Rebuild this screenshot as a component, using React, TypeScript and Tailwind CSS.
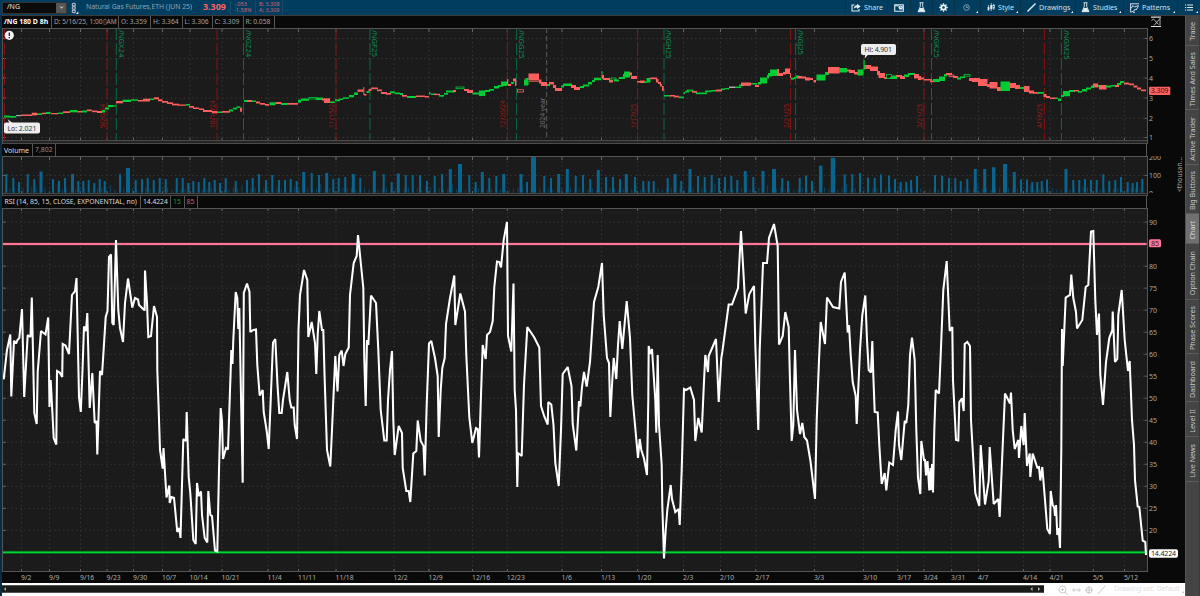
import type { ReactNode } from 'react';
import { ChevronDown } from 'lucide-react';

const RED = '#ff5f5f';
const GREEN = '#00cc33';

const WEEKS: [number, string][] = [
  [21.5, '9/2'], [49.5, '9/9'], [80.5, '9/16'], [107, '9/23'], [133.5, '9/30'], [162.5, '10/7'], [190, '10/14'],
  [222, '10/21'], [268, '11/4'], [298.5, '11/11'], [336, '11/18'], [394, '12/2'], [429, '12/9'], [472.5, '12/16'],
  [507.3, '12/23'], [562, '1/6'], [601.5, '1/13'], [637.6, '1/20'], [683.5, '2/3'], [720.5, '2/10'], [755.8, '2/17'],
  [814.4, '3/3'], [863.5, '3/10'], [897.5, '3/17'], [924, '3/24'], [951.6, '3/31'], [978.5, '4/7'], [1023.5, '4/14'],
  [1050, '4/21'], [1093.4, '5/5'], [1124.4, '5/12'],
];

const EXPIRATIONS: [number, string][] = [
  [4.5, ''], [107, '9/20/24'], [217, '10/18/24'], [336, '11/15/24'], [507.3, '12/20/24'], [637.6, '1/17/25'],
  [790.6, '2/21/25'], [924, '3/21/25'], [1044.4, '4/18/25'],
];

const CONTRACTS: [number, string][] = [
  [116.3, '/NGX24'], [243.5, '/NGZ24'], [370, '/NGF25'], [516.6, '/NGG25'], [664, '/NGH25'], [795.6, '/NGJ25'],
  [931.5, '/NGK25'], [1061.4, '/NGM25'],
];

// x y width height kind: g/r filled, o/p hollow green/red, w neutral
const CANDLES = `4 115.5 6 2 g;10 116 6 1.7 g;16 115 5 1.2 w;21 114.5 11 1.5 r;31.7 112.7 5.3 2.7 r;37 113.3 5 1.7 g;42 112.7 4 1.5 r;46 112 4.5 2 g;51 113 7 1.3 r;58 112.5 5 1.5 g;63 111.3 7 1.7 r;70 110 7 2.3 g;77 111 5 1.5 r;82 110.5 5 2 g;86.7 109.5 5 1.7 r;92 110.5 5.5 1.7 r;97 111 5 2 r;102 110 3 2.5 g;105 107.5 4 2 g;108 105 5 2 g;113 105.3 3 1.3 g;116 101 7 2.3 r;122.5 99.7 8.5 2.3 g;131 99.3 7 1.5 g;138 100 12 1.5 r;143 98.7 7 1.7 r;150 98.5 4 1.5 g;154 97.3 5 2 r;158 99.3 4.5 2 r;162 101 6 1.7 r;167 102.3 6 1.7 r;172 103.7 7 1.7 r;178 104.5 8 1.3 r;186 104 4 1.5 g;189 106 5 1.7 r;193 107.5 6 1.5 r;199 108.5 5 1.5 r;203 110 9 2 r;212 111 5 2.3 r;217 111.5 6 1.5 g;222 111 8 1.7 r;229 109.5 4 2 g;233 107.7 4 1.7 g;236.5 106.3 4 1.5 g;240 107.7 2 4 r;244 100 3 2 g;247 100 5 2 r;252 100.5 4 1.5 g;256 101.5 4 2 r;260 103 5 1.7 r;265 104 4 1.7 r;269.5 102.3 6 3 g;275.5 102 6 2 r;281 103 6 2 g;287 103 11 1.7 r;298 99.7 3 3 g;301 98.5 8 2.3 g;309 97.5 7 1.5 o;316 97.5 7 2.5 g;322 98.5 3 2 r;324 98.3 6 4.7 r;330 101.5 5 1.5 g;335 99.3 5 2 g;339 98.5 4 1.5 g;343 97.3 6 1.5 g;349 95 5 2.3 g;354 92.5 4 2.5 g;357.5 89.5 6 2.3 r;363.3 87 1 8 r;364 94 2.5 1.5 r;366.5 91 3 2 g;368.5 89 3 2 r;371 87.5 7 1.7 r;377 89.5 5 1.7 r;381 92 6 2 r;386 93 5 1.7 r;390 91.3 5 2 g;395 92.5 5 1.7 g;400 93 3 2 g;402 95 5 1.7 r;407 96 9 2 g;416 95.5 9 1.5 r;425 96 4 1.5 r;429 92 1.5 2.5 g;431 93.5 5 1.5 g;434 93.8 6 1.3 r;439 95 5 1.7 g;444 93 4 1.7 g;446 90.5 9 2 g;453 90 3 2 r;456 87 8 1.7 o;464 89 5 2 r;467 90 6 3 r;472.5 92.5 6.5 2 g;479 90.5 6 5.5 g;485 90 5 2 g;489 89 5 1.7 g;494 86 5 2.5 g;498 85 5 1.7 g;501 81.5 6 4.5 g;507 79 1.3 6 r;508 84 3 2 r;511 82 3 2 g;513 78.5 3 3 r;515 80 1.3 6 r;517.5 89.7 6 2.3 p;524 79.5 4 6 g;525.5 78 3 7 g;528.5 73.5 10.5 6.5 r;529 80.5 10 1.2 r;539 79.5 2.5 4 r;541 82 6 4 r;547 84 3 2 g;549 82 5 2.5 r;553 85 3 3 r;555 88 7 3 r;561 85.5 3 2 g;563 83.5 9 2.5 g;571 85 5 3 r;574 87 6 3 r;580 86 4 2 g;583 84.5 6 2 g;588 82 4 2.5 g;592 80 3 2 g;594 77.7 7 2.5 g;601.5 71 1 7 g;602 75 2 4 r;603 78 7 2 r;609 80 4 2.5 r;611 78 5 2 o;614 79.5 5 2 g;619 77 6 2 g;623 74 5 3 g;624 71.5 6 6 g;629 72.5 3 3 r;631 76 6 3 r;637 81 4 1.5 r;640 80.5 5 2.5 r;644 81.5 3 1.5 g;646.5 78 4 4.5 g;650 77.5 7 1.7 r;656 79 2.5 3.5 r;658 82 3 2 r;660 84 2 2.5 r;662 86 1.7 5 r;664 95 7 1.5 g;670 95 5 1.5 r;674 95.7 5 1.7 r;679 96.5 5 1.7 g;683.5 92 1.5 2 g;685 91 4 1.5 g;687 90 6 1 o;692 91 5 1.7 r;696 92.5 11 1.7 g;705 90.5 6 1.7 g;711 90 5 1.5 g;716 89.5 6 2 r;721 88.5 4 1.5 g;725 88 4 1.3 g;729 86.5 6 1.5 w;735 86.5 6 1.5 g;739 84.5 5 1.7 g;741 82.5 10 3.3 r;751 83 6 1.5 g;755 85 4 2 r;758 82 3 2.5 g;760 77.5 7 6 g;767 75 2 3.5 g;768 73 4 3.5 g;770 69.5 8 6.5 g;777 69 2 6 r;778 73 5 3 r;783 72 3 2.5 r;785 68.5 5 5.5 r;790 73 1 5 r;791 77.7 3 2 g;794 77 2 2 g;796 75.5 3 2.5 g;797 76 5 2.5 r;802 76.5 4 2 r;805 77.5 5 3 r;809 78 4 2 r;813.5 80 2.5 2.5 r;816.5 74.5 9 6 g;825 72 4 3 g;828 67 11.5 6.5 r;839 68 8 4.5 g;847 69.5 4 2 r;849 70 6 3 r;854 72 4 2.5 r;857.5 69.5 6 6 g;863.5 60 1.2 10 g;864 65 2 4 g;866 65 5 4 r;870 66.5 8 4.5 r;877 71 3 4 r;878.5 73 6.5 5 r;884 77 3 2 r;886.5 74.5 5 4 o;890 77 7 2 g;892 75.5 5 2.5 g;896 75 6 2 r;900 76 5 3 r;904 74.5 5 2.5 g;908 73 7 2 g;914 74 5 4.5 r;918 76 3 4 r;921 77.5 3 2 r;924 79 8 1.5 r;930 80.5 5 1.7 r;933 79 7 3 g;939 76.5 6 4.5 g;944 74 3 2.5 g;946 73 6 2 r;949 75 5 1.5 p;953 76 5 2 r;957 77.5 4 2 g;960 76.5 5 1.5 g;964 74.5 6 1.7 o;969 78 5 3 r;972 78 8 4 r;978 79 9.5 7 r;987 84 3 3 r;989.5 82 8 6.5 r;997 87 4 4 r;1000.5 81.5 9.5 9.5 g;1010 83 6 5 r;1015 85 5 4 r;1019 87 6 2 g;1024 86 5.5 6 r;1029 90.5 5 3 r;1033 92 6 1.7 r;1037 92 7 1.7 g;1043.5 94 3 3 r;1046 96 4 2 r;1050 97.5 5 1.5 r;1055 97.5 3 1.5 g;1058 98.5 3 2.5 g;1061 95 3 2 g;1063 91 7 5.3 g;1069 90 6 2 g;1074 90 5 1.5 r;1078 91 4 1.7 g;1082 89 5 2.5 g;1086 87.5 5 2 g;1091 85.5 3 2.5 g;1093 83.5 5 4 r;1098 85 3 2 g;1099 85 7.5 4.5 r;1106 85.5 5 2 g;1111 85 5 1.5 g;1115 85 4 2 r;1117 83 4 2 g;1120 81 4 2 g;1124 82.5 5 2 r;1129 83.5 5 1.7 r;1133.5 85.5 4 2 r;1137 87.5 4 2 r;1141 89.5 5 1.7 r`
  .split(';')
  .map((row) => {
    const [x, y, w, h, kind] = row.split(' ');
    return { x: +x, y: +y, w: +w, h: +h, kind };
  });

// center x, top y, width
const VOLUME: [number, number, number?][] = [
  [6.3, 174], [13.3, 178], [19, 182], [27.7, 174], [34.3, 179], [41, 171.5, 3], [53, 179], [59, 181], [65, 178],
  [72.5, 174, 3], [78.3, 181], [83.3, 181], [88.7, 180], [94.3, 183], [99.7, 179], [104.7, 181], [120, 174],
  [128, 168, 4], [135.7, 180], [142, 179], [147.7, 178], [153.7, 180], [159.7, 178], [165.7, 179], [176.7, 178],
  [182.7, 178], [188.3, 183], [193.3, 181], [198.7, 182], [204.3, 178], [209.3, 182], [214.7, 180], [220, 183],
  [225.7, 178], [235.7, 181], [247, 180], [252.7, 178], [259, 174], [266, 180], [272.3, 175], [279, 180], [285, 180],
  [290.7, 179], [296.7, 181], [303.7, 172, 3], [311.7, 173], [319, 175], [326.7, 173, 3], [333.3, 179], [338.7, 178],
  [345.3, 177], [353.3, 174, 3], [360.3, 178], [374.3, 171, 3], [383.7, 174], [391.7, 182], [398.3, 173.5, 3],
  [405.7, 175], [412.7, 175], [420, 175], [427, 181], [434.7, 176], [442, 174], [450.3, 169, 3], [460, 164, 4],
  [469.3, 175], [475.7, 182], [482.3, 172, 3], [489.3, 178], [496.3, 176], [503.7, 174, 3], [521, 174, 3], [527, 182],
  [533.5, 156.7, 5], [544.3, 176], [551, 178], [558.7, 174, 3], [567.3, 169, 3], [575.7, 176], [583, 175],
  [590.3, 179], [598.3, 170, 3], [606, 177], [613, 177], [620, 179], [626.3, 174, 3], [635, 177], [643.3, 181],
  [648.7, 181], [653.7, 181], [667.7, 178], [675, 174, 3], [681.3, 181], [690, 169, 3], [698, 176], [704.7, 177],
  [711.7, 175], [719, 178], [725, 177], [731.3, 176], [737.3, 180], [745.3, 171, 3], [753.3, 177], [763, 171, 3],
  [774, 169, 4], [782.3, 178], [788, 181], [799.7, 178], [806, 175.5], [812, 181], [820.7, 165.7, 3.5],
  [833, 157.7, 4.5], [844.7, 174.3], [852.3, 174], [860, 173], [868, 177.5], [874.7, 178], [881, 174.3], [889, 175.5],
  [895, 179], [900.7, 182], [906.3, 182], [911, 180], [917, 176], [935, 175], [942, 175.5], [949, 178], [955.3, 178],
  [960.7, 181], [967.3, 179], [975.3, 169, 3], [984.7, 169, 3], [993.7, 167.3, 3.5], [1005, 164, 4], [1014.3, 172, 3],
  [1021, 179.5], [1027, 179.5], [1032.3, 182], [1037.3, 182], [1041.7, 181], [1047, 179.5], [1066, 169, 3],
  [1073.3, 180], [1079.3, 180], [1085, 179], [1091, 180], [1096.7, 180], [1103.3, 174.3], [1109.3, 181], [1115.3, 180],
  [1121, 177], [1127.7, 182], [1132.7, 183], [1137, 182], [1142.3, 179],
];

const RSI_LINE =
  '3.7,379.3 7,350 10.3,334.5 11.3,396.5 14,340.7 16,343.5 17.5,340 19.3,338 22,309 24.2,397 27.7,335 30.5,337 31.8,297.5 34.3,413 36.7,424 37.7,372 41,331 45.5,334.5 48.2,317.5 49.5,407 50.7,380 53.7,438 56.3,444.5 57,371 59.7,372.5 62.2,377 62.7,344 65.5,345.5 69,354 72,295 75,291 76.5,278 79,397 80.8,412 82.5,370 84,326.5 86,331 87.3,313 89.7,408 92.3,373 94.7,423 96.5,421 97.3,454.5 100,371 102,375 103.5,352 105.7,317 107.5,311 109,257 111,254.5 112.3,323 113.7,325 116,240 118.3,310 120,328 123,342 125,303 128,278.5 132.3,307.5 135,298 138,299.5 139,305 144.7,310.5 145,270.5 147,303 148.3,337 151,336 154,306 157,317 157.3,370 158.5,404 160,450 162.7,468.5 163.5,448 166.5,497.5 169.3,485.5 169.7,503 171.3,497 174,497.7 177.3,532 179.3,528 180.5,538 181.7,495 183.3,439 186,441 186.7,412 188.7,477 190.3,493 193.3,540 195.7,544 197,483 198.7,496 201,491.5 202,515 204.7,538 207.3,542.5 208.3,491 210.3,515 212,516 215,550.5 217.3,551.5 219,470 220.7,408 222,421 223,459 226,448 228,449.5 230.7,370 231.3,350 232.5,364 233.3,340 235.7,292 237.3,298 238.3,329 239.3,308 242.7,482.7 243.8,293 247,283.5 249.5,292 250.3,332 253.3,330 256,329.5 257.3,365 259.7,395.5 262.7,390 263.7,412 266.7,431 268.7,449 270.7,400 273,342.5 275.3,339 277.5,385 279.3,413 281.7,413 283,400 287.3,372 289.7,400 291.3,407.5 293.7,407.5 294.7,425 297,439 298.5,330 300,295 304,270 307.3,280 308.3,337 311.7,322 315,343 316.3,374 317.7,335 319.3,311 322,330 323.3,330 324.7,380 327,450 330.3,466.5 332,430 335.3,356 337.5,391.5 339.3,355 341.7,350.5 343.5,366 345.3,354 348.7,347.5 350,295 353.7,263 356.7,256 358,235 361,265 363.3,288 364.3,360 365.7,406 367,340 368.3,345 371,295.5 376,303 378.3,350 380.7,410 384.3,440.5 386.7,440.5 388,400 390,370 392,351 393.3,420 394.7,455 398.7,426 402,433 402.7,468 406.3,491 408.7,491 410.3,502 413.3,453.5 416.3,451 417.7,420.5 420.7,441 423.5,446 424.7,475.5 426.7,405 429,343.5 431.3,341 435,358 437.7,376 438.7,437 440.7,390 442.3,368 444.7,358 446,324 450,298 454.3,275.5 455.3,325 457.7,310 460.3,293.5 465,311.5 466.3,355 469.3,417 472.3,443 476,428 477.7,429 479,457.5 481,395 482.7,345 485.7,359 487,335 490,332 492.7,321 494.3,287 497,261.5 499.3,262 501,267.5 503.7,240 507,222 508,336 511.3,351.5 513.5,283.5 514.7,390 516,410 517.3,487 518,453 521.7,456 524,385 527.3,327 534.3,337.5 539.3,347.5 541,406 544.3,416.5 547.7,424.5 548.3,402 551.3,404.5 553.5,425 555.3,463 558.7,486 561,430 562.7,374 567.7,367 571.5,386 572.7,424 576.3,450.5 579,401 580.3,406.5 582,387 584,372 586.7,386.5 590,362 594,302 598.3,287 602,263 603.7,315 607,358 609,363 610.3,417 612,385 613.7,358 616.3,379 618,345 619.7,321 622.3,349 626.7,301 630,338 632.3,395 635,425 638,458 639.7,439 641.3,450 644,458.5 647,475 648.3,400 648.7,346 650.3,354 652,349 655.3,400 656.3,432.7 657.7,355 659,425 661.7,465 662.3,505 664,558.5 665.7,530 667.3,510 670.7,485 672,499 675.3,512 678.7,509 679.7,525 681.7,470 684,389 686,390 690.3,387.5 694,400 695.3,441 698.3,418 701.7,432.5 703.7,388 705.3,355 708,372 708.7,356 716,339 718.7,402 721.3,358 722.3,352 728.7,304.5 732,304.5 738,288 741,231 743.3,270 745.7,313.5 749.3,294 754,286 755.3,345 758.3,430 759.7,350 763,263 767,263 769,238 774,224 777.7,246 779,344.5 782.7,336 785.3,312 788.7,327 789.7,370 791.7,441 793.3,425 795,350 797,410 800,434 802.3,423 804.3,437 807,440.5 810.3,460 815,499 816.7,420 819,360 820.7,322 825,344 827,297.5 833,307 839.3,308.5 841,282 844.7,272.5 847.7,332.5 849,325 850.7,355 852.7,382 855.7,396 856.7,424 860,350 862.3,315 865.3,295.5 867,340 868.7,370 871,372.5 872.3,341 873.3,375 874.7,412 877.7,412.5 879.3,445 881.7,484 884.7,473 886.3,490.5 889.3,462.5 893,465 895.7,430 898,411.5 899,445 901.3,460 904.7,421 906.3,423 908.3,405 910,355 912,337.5 914.7,360 916.3,430 918,478 920.3,494 921.3,441 924,460 925,460 926,475.5 927.5,461 929.3,490.5 930.5,468 931.2,490 932,464 933,492.5 934.3,430 935.7,390 939,393.5 940.7,355 943.3,290 946.7,261 949.7,331 952.3,327 953,380 956,440 958.3,440.5 959.3,402 962,398.5 963.7,411 964.7,344 967.3,342 970,346 971,420 972.7,450 975.3,493 979.3,506 980.7,445 985,504.5 988.7,481 989.7,447 992,480 993.7,504 998.3,499 999.7,517 1002.3,455 1005,393.5 1010,403.5 1011,392.5 1012.7,430 1014.7,449 1018.3,440 1019,458 1021.3,426 1023.7,445 1024.7,413 1027,466 1029.7,453.5 1030.3,477 1032.7,453.5 1037.3,467.5 1039,467 1040.3,480.5 1042.3,467 1045,500 1047.3,529 1050,534 1050.7,491 1052.7,505 1054.3,508 1055,516 1056,505 1057.3,535 1058.7,528 1060,548 1061.3,450 1062,329 1062.7,366 1065.7,297.5 1070,295 1071.3,274.5 1073.3,298 1076,312 1077,328.5 1082.3,320 1085.7,287 1088.3,285 1091,231.5 1093.3,231 1095.3,300 1097,335 1099,313.5 1100.3,375 1103,405 1106,362 1109.3,338 1112.3,330 1112.7,311.5 1115,362 1117.3,359 1118.3,315 1121.7,290 1124.7,340 1128,371 1129.7,361 1132,420 1134,445 1135,480 1137.7,506.5 1139.3,507 1142.7,540.5 1145.3,542 1146,555';

const TABS = [
  { label: 'Trade', size: 'h-[31px]' },
  { label: 'Times And Sales', size: 'h-[64px]' },
  { label: 'Active Trader', size: 'h-[55px]' },
  { label: 'Big Buttons', size: 'h-[49px]' },
  { label: 'Chart', size: 'h-[30px]', active: true },
  { label: 'Option Chain', size: 'h-[56px]' },
  { label: 'Phase Scores', size: 'h-[54px]' },
  { label: 'Dashboard', size: 'h-[48px]' },
  { label: 'Level II', size: 'h-[35px]' },
  { label: 'Live News', size: 'h-[45px]' },
];

function Grid({ top, bottom, rows }: { top: number; bottom: number; rows: number[] }) {
  return (
    <g>
      <g stroke="#3a3a3a" strokeDasharray="1.3 3">
        {WEEKS.map(([x]) => (
          <line key={x} x1={x} x2={x} y1={top} y2={bottom} />
        ))}
        {rows.map((y) => (
          <line key={y} x1="3" x2="1147" y1={y} y2={y} />
        ))}
      </g>
      <g stroke="#666">
        {WEEKS.map(([x]) => (
          <path key={x} d={`M${x} ${top}v3M${x} ${bottom}v-2`} />
        ))}
        {rows.map((y) => (
          <path key={y} d={`M3 ${y}h3M1144.500 ${y}h3`} />
        ))}
      </g>
    </g>
  );
}

function Plot({ top, height, children }: { top: number; height: number; children: ReactNode }) {
  return (
    <svg
      viewBox={`2 ${top} 1183 ${height}`}
      width="1183"
      height={height}
      className="block shrink-0"
      fontFamily='"Noto Sans", sans-serif'
      fontSize="7"
    >
      <rect x="2" y={top} width="1145" height={height} fill="#1b1b1b" />
      {children}
      <path d={`M2.500 ${top}v${height}M1147.500 ${top}v${height}`} stroke="#555" />
    </svg>
  );
}

function Cell({ children, className = '' }: { children: ReactNode; className?: string }) {
  return (
    <div className={`flex h-full items-center border-r border-[#555] whitespace-nowrap ${className}`}>{children}</div>
  );
}

function PriceChart() {
  return (
    <Plot top={28} height={116}>
      <Grid top={29} bottom={140} rows={[38.5, 58.5, 78, 98, 118.3, 137.5]} />
      <g stroke="#861414" strokeDasharray="12 3">
        {EXPIRATIONS.map(([x]) => (
          <line key={x} x1={x} x2={x} y1="28" y2="140" />
        ))}
      </g>
      <g stroke="#0d6b42" strokeDasharray="12 3">
        {CONTRACTS.map(([x]) => (
          <line key={x} x1={x} x2={x} y1="28" y2="140" />
        ))}
      </g>
      <line x1="546.700" x2="546.700" y1="28" y2="138" stroke="#5e5e5e" strokeDasharray="5 3" />
      {EXPIRATIONS.filter(([, label]) => label).map(([x, label]) => (
        <text key={label} transform={`translate(${x - 2} 128) rotate(-90)`} fill="#a01717" fontSize="6.7">
          {label}
        </text>
      ))}
      {CONTRACTS.map(([x, label]) => (
        <text key={label} transform={`translate(${x + 2.2} 30) rotate(90)`} fill="#0f8a54" fontSize="7.6">
          {label}
        </text>
      ))}
      <text transform="translate(545 128) rotate(-90)" fill="#727272" fontSize="6.6">
        2024 year
      </text>
      {CANDLES.map(({ x, y, w, h, kind }, i) => {
        if (kind === 'o' || kind === 'p') {
          return (
            <rect key={i} x={x} y={y} width={w} height={h} fill="none" stroke={kind === 'o' ? GREEN : RED} strokeWidth=".8" />
          );
        }
        return <rect key={i} x={x} y={y} width={w} height={h} fill={kind === 'g' ? GREEN : kind === 'r' ? RED : '#aaa'} />;
      })}
      <circle cx="9.300" cy="35.300" r="4.600" fill="#f2f2f2" />
      <path d="M9.300 32.500v3.400M9.300 37v1.300" stroke="#222" strokeWidth="1.300" />
      <path d="M7.500 119l2 4h3z" fill="#eee" />
      <path d="M864.700 58.500l.5-4h3z" fill="#eee" />
      <rect x="4" y="122.500" width="36" height="11" rx="2" fill="#ededed" />
      <text x="7.500" y="130.700" fill="#333" textLength="29">
        Lo: 2.021
      </text>
      <rect x="861" y="44" width="35" height="11" rx="2" fill="#ededed" />
      <text x="864.500" y="52.200" fill="#333" textLength="27.500">
        Hi: 4.901
      </text>
      <g fill="#a8a8a8">
        <text x="1149" y="40.900">6</text>
        <text x="1149" y="60.900">5</text>
        <text x="1149" y="80.600">4</text>
        <text x="1149" y="100.600">3</text>
        <text x="1149" y="120.900">2</text>
        <text x="1149" y="140">1</text>
      </g>
      <rect x="1149" y="86.700" width="21.300" height="8.300" rx="1" fill="#ff5f5f" />
      <text x="1150.800" y="93.400" fill="#421010" textLength="17.500">
        3.309
      </text>
      <path d="M2 28.500h1145" stroke="#555" />
      <rect x="2" y="140" width="1145" height="4" fill="#252525" />
      <path d="M2 140.500h1145M2 143.500h1145" stroke="#4a4a4a" />
    </Plot>
  );
}

function VolumeChart() {
  const ticks = Array.from({ length: 260 }, (_, i) => ({ x: 5 + i * 4.38, h: 3 + ((i * 7) % 5) * (i % 6 === 0 ? 1.5 : 0.5) }));
  return (
    <Plot top={156} height={40}>
      <Grid top={157} bottom={193} rows={[175.5]} />
      <g fill="#0b4664">
        {ticks.map(({ x, h }) => (
          <rect key={x} x={x} y={192.7 - h} width="1" height={h} />
        ))}
      </g>
      <g fill="#086590">
        {VOLUME.map(([x, y, w = 2]) => (
          <rect key={x} x={x - w / 2} y={y} width={w} height={192.7 - y} />
        ))}
      </g>
      <g fill="#a8a8a8">
        <text x="1149" y="160">200</text>
        <text x="1149" y="178.200">100</text>
        <text x="1149" y="196">0</text>
      </g>
      <path d="M1148 193h30v3h-30z" fill="#090909" />
      <text transform="translate(1182 192) rotate(-90)" fill="#aaa" fontSize="6.500" textLength="35">
        &lt;thousan...
      </text>
      <path d="M2 156.500h1145" stroke="#555" />
      <path d="M2 193.500h1145M2 195.500h1145" stroke="#484848" />
    </Plot>
  );
}

function RsiChart() {
  const levels = [90, 85, 80, 75, 70, 65, 60, 55, 50, 45, 40, 35, 30, 25, 20, 15];
  const yOf = (level: number) => 222.1 + (90 - level) * 4.403;
  return (
    <Plot top={208} height={364}>
      <Grid top={208} bottom={571} rows={levels.map(yOf)} />
      <path d="M3 244h1143.500" stroke="#5c2a38" strokeWidth="3" />
      <path d="M3 244h1143.500" stroke="#ff7796" strokeWidth="1.800" />
      <path d="M3 552.300h1142" stroke="#0a4c1a" strokeWidth="3" />
      <path d="M3 552.300h1142" stroke="#00d62f" strokeWidth="1.800" />
      <polyline points={RSI_LINE} fill="none" stroke="#fff" strokeWidth="2.050" strokeLinejoin="miter" strokeMiterlimit="2" />
      <g fill="#a8a8a8">
        {levels
          .filter((level) => level !== 85 && level !== 15)
          .map((level) => (
            <text key={level} x="1149" y={yOf(level) + 2.8}>
              {level}
            </text>
          ))}
      </g>
      <rect x="1149" y="239.300" width="12" height="8" rx="1.500" fill="#ff7796" />
      <text x="1151" y="245.900" fill="#451522">
        85
      </text>
      <rect x="1149" y="549.300" width="29" height="8.500" rx="2" fill="#fff" />
      <text x="1151" y="556.200" fill="#222" textLength="25">
        14.4224
      </text>
      <path d="M2 208.500h1145M2 571.500h1145" stroke="#555" />
    </Plot>
  );
}

function ToolButton({ children, menu, className }: { children: ReactNode; menu?: boolean; className: string }) {
  return (
    <div className={`relative flex h-full items-center gap-[3px] border-l border-[#0b3148] text-[#cfe0ea] ${className}`}>
      {children}
      {menu && (
        <svg className="absolute right-[2px] bottom-[2px]" width="2" height="2" viewBox="0 0 2 2">
          <path d="M2 0v2H0z" fill="#fff" />
        </svg>
      )}
    </div>
  );
}

function Flask() {
  return (
    <svg width="9" height="11" viewBox="0 0 9 11" fill="none" stroke="#e3edf3">
      <path d="M2.500.7h4M3.300 1v3.500L1 9.700h7L5.700 4.500V1" strokeWidth=".9" />
      <path d="M3 6h3l1.800 3.700H1.200z" fill="#e3edf3" stroke="none" />
    </svg>
  );
}

function TopBar() {
  return (
    <header className="flex h-[15px] shrink-0 items-center bg-[#003d5f] text-[7px]">
      <div className="ml-[2px] flex h-[12px] w-[65px] items-center justify-between border border-[#333] bg-[#0b0b0b] pl-1 text-[7px] text-[#e6e6e6]">
        /NG
        <span className="flex h-[10px] w-[10px] items-center justify-center bg-[#555]">
          <ChevronDown size={7} fill="#bbb" color="#bbb" />
        </span>
      </div>
      <svg className="ml-[4px] shrink-0" width="8" height="12" viewBox="0 0 8 12">
        <g fill="none" stroke="#a9bdca" strokeWidth="1.200">
          <rect x="1.300" y="1.300" width="3" height="2.600" rx="1" />
          <rect x="1.300" y="4.700" width="3" height="2.600" rx="1" />
          <rect x="1.300" y="8.100" width="3" height="2.600" rx="1" />
        </g>
        <path d="M7.300 9.500v2.500H5z" fill="#fff" />
      </svg>
      <div className="ml-[7px] w-[117px] text-[6.800px] whitespace-nowrap text-[#93a8b5]">Natural Gas Futures,ETH (JUN 25)</div>
      <div className="w-[27px] text-[8.900px] leading-none font-bold text-[#ff6464]">3.309</div>
      <div className="h-[13px] w-[25px] border-l border-[#164c69] pl-[3px] text-[5.600px] leading-[6px] text-[#d06875]">
        -.053
        <br />
        -1.58%
      </div>
      <div className="h-[13px] w-[28px] border-x border-[#164c69] pl-[3px] text-[5.500px] leading-[6px] whitespace-nowrap text-[#d06875]">
        B: 3.308
        <br />
        A: 3.309
      </div>
      <div className="ml-auto flex h-full text-[7.100px]">
        <ToolButton className="w-[42px] pl-[5px]">
          <svg width="10" height="9" viewBox="0 0 10 9">
            <path d="M3.500 2H1v6h7V6" fill="none" stroke="#e3edf3" strokeWidth="1.100" />
            <path d="M2.800 6C3 3.500 4 2.400 6 2.300V.7L9.700 3.500 6 6.100V4.500C4.500 4.500 3.500 5 2.800 6z" fill="#e3edf3" />
          </svg>
          Share
        </ToolButton>
        <ToolButton className="w-[23px] justify-center">
          <svg width="10" height="8" viewBox="0 0 10 8">
            <path d="M.7.700h8.600v6.600H.7z" fill="none" stroke="#e3edf3" strokeWidth="1.100" />
            <path d="M1 1.800h4" stroke="#e3edf3" />
            <circle cx="6.800" cy="3.600" r="2.200" fill="#e3edf3" />
            <path d="M6.800 2.400v1.400h1" fill="none" stroke="#003d5f" strokeWidth=".6" />
          </svg>
        </ToolButton>
        <ToolButton className="w-[22px] justify-center"><Flask /></ToolButton>
        <ToolButton className="w-[22px] justify-center">
          <svg width="9" height="9" viewBox="0 0 9 9" fill="none" stroke="#f2f7fa">
            <circle cx="4.500" cy="4.500" r="2.200" strokeWidth="1.700" />
            <path d="M4.500.200v1.600M4.500 7.200v1.600M.2 4.500h1.600M7.200 4.500h1.600M1.500 1.500l1.100 1.100M6.400 6.400l1.100 1.100M1.500 7.500l1.100-1.100M6.400 2.600l1.100-1.100" strokeWidth="1.300" />
          </svg>
        </ToolButton>
        <ToolButton className="w-[26px] pl-[8px]" menu>
          <svg width="7" height="7" viewBox="0 0 7 7" fill="none" stroke="#9db8c8" strokeWidth=".8">
            <circle cx="3.500" cy="3.500" r="2.800" />
            <path d="M3.500 1.700v1.800h1.700" />
          </svg>
        </ToolButton>
        <ToolButton className="w-[40px] pl-[6px]" menu>
          <svg width="8" height="9" viewBox="0 0 8 9" stroke="#e3edf3">
            <path d="M1.500 2v6M4.200 0v8M6.700 1v6" strokeWidth=".7" />
            <path d="M1.500 4v3M4.200 2v4" strokeWidth="1.800" />
            <rect x="5.900" y="2.200" width="1.600" height="3" fill="#003d5f" strokeWidth=".7" />
          </svg>
          Style
        </ToolButton>
        <ToolButton className="w-[55px] pl-[6px]" menu>
          <svg width="9" height="9" viewBox="0 0 9 9">
            <path d="M.5 8.500l8-8" stroke="#e3edf3" strokeWidth="1.400" />
          </svg>
          Drawings
        </ToolButton>
        <ToolButton className="w-[48px] pl-[5px]" menu>
          <Flask />
          Studies
        </ToolButton>
        <ToolButton className="w-[54px] pl-[6px]" menu>
          <svg width="9" height="10" viewBox="0 0 9 10" fill="none" stroke="#e3edf3" strokeWidth=".9">
            <path d="M0 .8h9M.6 1v8.500M1 5.500l2-3 1.500 1.500L8.500 2.500M1.200 9l3-1.200 1-1.800 1 1L8.500 3M3 9.300h2" />
          </svg>
          Patterns
        </ToolButton>
        <ToolButton className="w-[23px] pl-[7px]" menu>
          <svg width="8" height="7" viewBox="0 0 8 7" stroke="#e3edf3">
            <path d="M0 1h1.200M2.200 1H8M0 3.500h1.200M2.200 3.500H8M0 6h1.200M2.200 6H8" />
          </svg>
        </ToolButton>
      </div>
    </header>
  );
}

export default function App() {
  return (
    <div className="flex h-[596px] w-[1200px] flex-col overflow-hidden bg-[#090909] font-['Noto_Sans',sans-serif]">
      <TopBar />
      <div className="flex min-h-0 flex-1">
        <main className="flex w-[1185px] flex-col border-l-2 border-[#0a2c40]">
          <div className="flex h-[13px] shrink-0 justify-between border-t border-[#3b3b3b] text-[6.700px] text-[#a3a3a3]">
            <div className="flex">
              <Cell className="w-[50px] pl-[2px] text-[6.900px] font-bold text-white">/NG 180 D 8h</Cell>
              <Cell className="w-[67px] pl-[2px] text-[6.600px]">D: 5/16/25, 1:00▯AM</Cell>
              <Cell className="w-[32px] pl-[2px]">O: 3.359</Cell>
              <Cell className="w-[31.500px] pl-[2px]">H: 3.364</Cell>
              <Cell className="w-[30px] pl-[2px]">L: 3.306</Cell>
              <Cell className="w-[31px] pl-[2px]">C: 3.309</Cell>
              <Cell className="w-[31px] pl-[2px]">R: 0.058</Cell>
            </div>
            <svg className="mr-[23px]" width="12" height="12" viewBox="0 0 12 12" fill="none" stroke="#ddd">
              <path d="M1 1.200h10M1 10.500h10" strokeWidth="1.200" />
              <path d="M1.500 4.500l2-1.500 5 5.500M4 9.500L10 2.500M10 2.500v7" strokeWidth=".8" />
            </svg>
          </div>
          <PriceChart />
          <div className="flex h-[12px] w-[1145px] shrink-0 border-r border-[#555] text-[7.050px] text-[#dedede]">
            <Cell className="w-[31px] pl-[2px]">Volume</Cell>
            <Cell className="w-[23px] pl-[2px] text-[6.900px] text-[#8f8f8f]">7,802</Cell>
          </div>
          <VolumeChart />
          <div className="flex h-[12px] w-[1145px] shrink-0 border-r border-[#555] text-[6.850px] text-[#dedede]">
            <Cell className="w-[139px] pl-[2.500px]">RSI (14, 85, 15, CLOSE, EXPONENTIAL, no)</Cell>
            <Cell className="w-[30px] pl-[2px] text-[6.700px]">14.4224</Cell>
            <Cell className="w-[13.500px] pl-[2px] text-[#19a038]">15</Cell>
            <Cell className="w-[13px] pl-[2px] text-[#c96078]">85</Cell>
          </div>
          <RsiChart />
          <svg
            viewBox="2 572 1183 11"
            width="1183"
            height="11"
            className="block shrink-0"
            fontFamily='"Noto Sans", sans-serif'
            fontSize="6.800"
            fill="#b0b0b0"
          >
            {WEEKS.map(([x, label]) => (
              <text key={label} x={x - 0.5} y="580">
                {label}
              </text>
            ))}
          </svg>
          <footer className="flex h-[13px] shrink-0 bg-white">
            <div className="mt-[2px] flex h-[8px] w-[1042px] items-center justify-between border-y border-[#555] bg-[#191b19] px-[1px] pr-[3px]">
              <svg width="4" height="4" viewBox="0 0 4 4">
                <path d="M3 0v4L.7 2z" fill="#999" />
              </svg>
              <svg width="11" height="4" viewBox="0 0 11 4">
                <path d="M2.500 0v4L.5 2zM8 0v4l2-2z" fill="#bbb" />
              </svg>
            </div>
            <div className="relative flex flex-1 items-center gap-[8px] pl-[14px] text-[6.900px] whitespace-nowrap text-[#dedede]">
              <svg className="shrink-0" width="48" height="10" viewBox="0 0 48 10" fill="none" stroke="#c4c4c4" strokeWidth=".9">
                <circle cx="4.500" cy="4.500" r="3.500" />
                <path d="M3 4.500h3M4.500 3v3M7 7l3 2.700M15 5h7M16.500 3l-2 2 2 2M20.500 3l2 2-2 2" />
                <circle cx="31" cy="5" r="3" />
                <path d="M27 5h8M31 1v8M40 9l7-8" />
              </svg>
              Drawing set: Default
              <svg className="absolute right-[1px] bottom-[3px]" width="2" height="2" viewBox="0 0 2 2">
                <path d="M2 0v2H0z" fill="#bbb" />
              </svg>
            </div>
          </footer>
        </main>
        <nav className="flex w-[15px] flex-col border-r border-l border-r-[#0d4868] border-l-[#555] bg-[#444]">
          {TABS.map(({ label, size, active }) => (
            <div
              key={label}
              className={`flex shrink-0 items-center justify-center border-b border-[#5c5c5c] pt-[3px] ${size} ${active ? 'bg-[#707070] text-[#dadada]' : 'text-[#c8c8c8]'}`}
            >
              <span className="rotate-180 text-[7.150px] leading-none whitespace-nowrap [writing-mode:vertical-rl]">{label}</span>
            </div>
          ))}
        </nav>
      </div>
    </div>
  );
}
